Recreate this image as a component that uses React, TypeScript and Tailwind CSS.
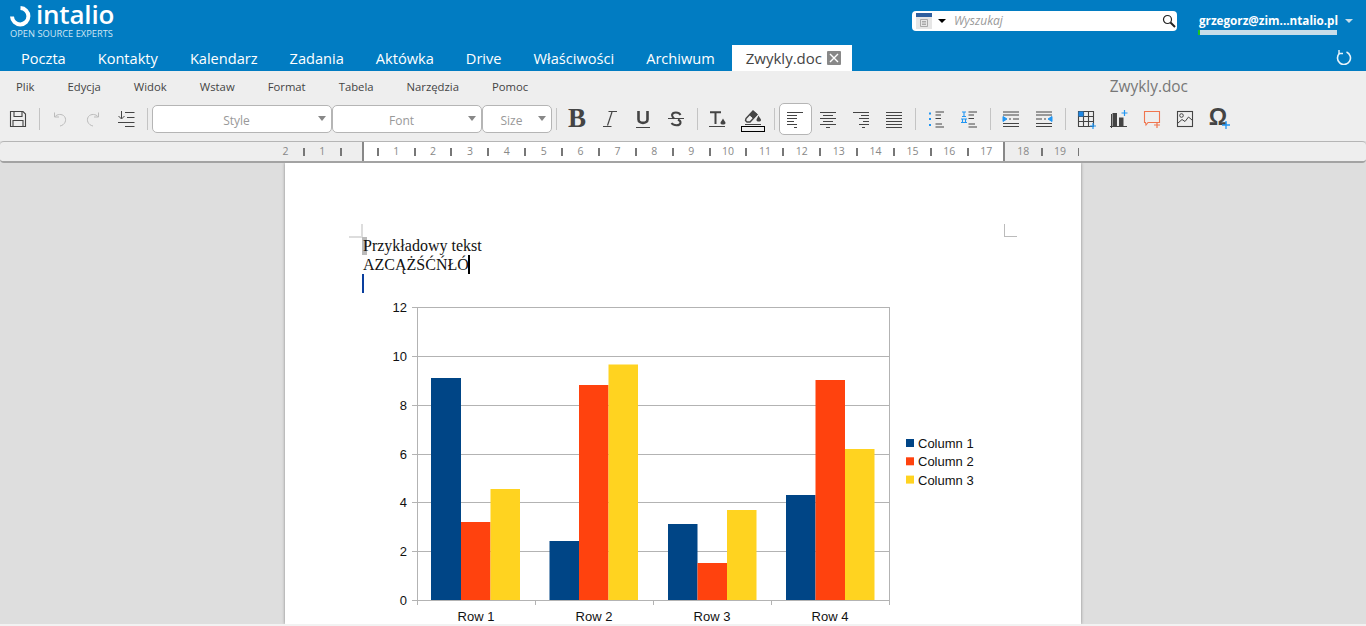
import React from "react";

const tabs = ["Poczta", "Kontakty", "Kalendarz", "Zadania", "Aktówka", "Drive", "Właściwości", "Archiwum"];
const menus = ["Plik", "Edycja", "Widok", "Wstaw", "Format", "Tabela", "Narzędzia", "Pomoc"];

const Ic = ({ children, w = 20, h = 20 }: { children: React.ReactNode; w?: number; h?: number }) => (
  <svg width={w} height={h} viewBox={`0 0 ${w} ${h}`} fill="none" stroke="#444" strokeWidth="1">
    {children}
  </svg>
);

const Btn = ({ children }: { children: React.ReactNode }) => (
  <div className="w-[33px] h-[28px] flex items-center justify-center shrink-0">{children}</div>
);

const Sep = () => <div className="w-px h-[22px] bg-[#c4c4c4] mx-[4px] shrink-0" />;

const Select = ({ label, width, pad }: { label: string; width: string; pad: string }) => (
  <div className={`${width} h-[28px] shrink-0 bg-white border border-[#b5b5b5] rounded-[5px] flex items-center relative`}>
    <span className={`${pad} pt-[4px] text-[12px] text-[#999] text-center`}>{label}</span>
    <span className="absolute right-[5px] top-[10px] w-0 h-0 border-l-[4px] border-r-[4px] border-t-[5px] border-l-transparent border-r-transparent border-t-[#888]" />
  </div>
);

// lines of the alignment icons, [x1, x2, y]
const AlignIcon = ({ rows }: { rows: number[][] }) => (
  <Ic w={18} h={18}>
    {rows.map((r, i) => (
      <path key={i} d={`M${r[0]} ${r[2] + 0.5}H${r[1]}`} />
    ))}
  </Ic>
);

const rulerRow = (from: number, to: number) => {
  const out: React.ReactNode[] = [];
  for (let n = from; n <= to; n++) {
    out.push(
      <div key={"t" + n} className="w-[18.44px] flex justify-center shrink-0">
        <div className="w-[2px] h-[8px] bg-[#777]" />
      </div>
    );
    out.push(
      <div key={"n" + n} className="w-[18.44px] flex justify-center shrink-0 text-[10.5px] text-[#888]">
        {n}
      </div>
    );
  }
  return out;
};

const gridYs = [307.5, 356.5, 405.5, 454.5, 502.5, 551.5, 600.5];
const yLabels = ["12", "10", "8", "6", "4", "2", "0"];
const bars = [
  { x: 431, w: 30, top: 378, c: "#004586" },
  { x: 461, w: 29.5, top: 522, c: "#ff420e" },
  { x: 490.5, w: 29.5, top: 489, c: "#ffd320" },
  { x: 549.5, w: 29.5, top: 541, c: "#004586" },
  { x: 579, w: 29.5, top: 385, c: "#ff420e" },
  { x: 608.5, w: 29.5, top: 364.5, c: "#ffd320" },
  { x: 668, w: 29.5, top: 524, c: "#004586" },
  { x: 697.5, w: 29.5, top: 563, c: "#ff420e" },
  { x: 727, w: 29.5, top: 510, c: "#ffd320" },
  { x: 786, w: 29.5, top: 495, c: "#004586" },
  { x: 815.5, w: 29.5, top: 380, c: "#ff420e" },
  { x: 845, w: 29.5, top: 449, c: "#ffd320" },
];

const Chart = () => (
  <svg width="640" height="332" viewBox="363 293 640 332" className="block" fontFamily="'Liberation Sans', sans-serif" fontSize="13" fill="#111">
    {gridYs.map((y) => (
      <path key={y} d={`M412 ${y}H889.5`} stroke="#b3b3b3" />
    ))}
    <path d="M417.5 307V605M535.5 600V605M653.5 600V605M771.5 600V605M889.5 307V605" stroke="#b3b3b3" />
    {bars.map((b) => (
      <rect key={b.x} x={b.x} y={b.top} width={b.w} height={600 - b.top} fill={b.c} />
    ))}
    {gridYs.map((y, i) => (
      <text key={y} x="407" y={y + 4} textAnchor="end">
        {yLabels[i]}
      </text>
    ))}
    {["Row 1", "Row 2", "Row 3", "Row 4"].map((r, i) => (
      <text key={r} x={476 + i * 118} y="621" textAnchor="middle">
        {r}
      </text>
    ))}
    {["Column 1", "Column 2", "Column 3"].map((c, i) => (
      <g key={c}>
        <rect x="906" y={439 + i * 18.3} width="8" height="8" fill={["#004586", "#ff420e", "#ffd320"][i]} />
        <text x="918" y={448 + i * 18.3}>
          {c}
        </text>
      </g>
    ))}
  </svg>
);

export default function App() {
  return (
    <div className="h-[626px] w-[1366px] overflow-hidden flex flex-col bg-[#dedede] font-['Open_Sans',sans-serif]">
      {/* blue header */}
      <div className="h-[71px] bg-[#017cc2] flex flex-col shrink-0 text-white">
        <div className="h-[45px] flex items-start">
          <div className="ml-[10px] w-[110px] shrink-0">
            <div className="flex items-center h-[28px]">
              <svg width="24" height="26" viewBox="0 0 24 26" fill="none" className="shrink-0">
                <path d="M2 15.5A8.2 8.2 0 1 0 10.5 7" stroke="#fff" strokeWidth="4" />
              </svg>
              <span className="text-[26px] leading-[28px] ml-[2px] font-semibold tracking-[-0.2px]">intalio</span>
            </div>
            <div className="text-[9.3px] leading-[11px] text-[#cfe6f4] whitespace-nowrap">OPEN SOURCE EXPERTS</div>
          </div>
          <div className="ml-[792px] mt-[11px] w-[265px] h-[20px] bg-white rounded-[4px] flex items-center shrink-0 relative">
            <svg width="18" height="18" viewBox="0 0 18 18" className="ml-[3px] shrink-0">
              <rect x="1" y="1" width="16" height="16" fill="#e6e6e6" />
              <rect x="1" y="1" width="16" height="4" fill="#2f5f9e" />
              <path d="M5.5 7.5h7v7h-7zM7 9.5h4M7 11h4M7 12.5h4" stroke="#999" fill="none" strokeWidth="0.8" />
            </svg>
            <span className="ml-[5px] w-0 h-0 border-l-[4px] border-r-[4px] border-t-[4px] border-l-transparent border-r-transparent border-t-black" />
            <span className="ml-[8px] text-[12px] italic text-[#9a9a9a]">Wyszukaj</span>
            <svg width="14" height="14" viewBox="0 0 14 14" fill="none" stroke="#222" className="absolute right-[1px] top-[3px]">
              <circle cx="5.5" cy="5.5" r="4" strokeWidth="1.2" />
              <path d="M8.5 8.5L13 13" strokeWidth="2" />
            </svg>
          </div>
          <div className="ml-[21px] mt-[12px] w-[139px] shrink-0">
            <div className="text-[11.7px] leading-[17px] font-bold whitespace-nowrap pl-[1px]">grzegorz@zim...ntalio.pl</div>
            <div className="h-[5px] mt-[1px] bg-[#c8dde9]">
              <div className="h-[5px] w-[2px] bg-[#1fc31f]" />
            </div>
          </div>
          <span className="ml-[8px] mt-[19px] w-0 h-0 border-l-[4px] border-r-[4px] border-t-[4px] border-l-transparent border-r-transparent border-t-[#c8dde9]" />
        </div>
        <div className="h-[26px] flex items-stretch pl-[5px]">
          {tabs.map((t) => (
            <div key={t} className="px-4 text-[14.6px] leading-[26px]">
              {t}
            </div>
          ))}
          <div className="ml-[1px] w-[120px] bg-white text-[#444] pl-[14px] text-[15px] leading-[26px] flex items-center">
            Zwykly.doc
            <span className="ml-[5px] w-[14px] h-[14px] bg-[#888] flex items-center justify-center rounded-[1px]">
              <svg width="10" height="10" viewBox="0 0 10 10" stroke="#fff" strokeWidth="1.4">
                <path d="M1 1L9 9M9 1L1 9" />
              </svg>
            </span>
          </div>
          <svg width="16" height="16" viewBox="0 0 16 16" fill="none" stroke="#e8f3fa" strokeWidth="1.6" className="ml-auto mr-[14px] mt-[4px]">
            <path d="M10.5 3A6.5 6.5 0 1 1 3.8 4" />
            <path d="M7 4.5H3V1" strokeWidth="1.4" />
          </svg>
        </div>
      </div>

      {/* menu + toolbar */}
      <div className="h-[70px] bg-[#eee] shrink-0 flex flex-col">
        <div className="h-[31px] pt-[1px] flex items-center pl-4 gap-[33px] text-[11.3px] text-[#444]">
          {menus.map((m) => (
            <span key={m}>{m}</span>
          ))}
          <span className="ml-auto mr-[178px] text-[15.4px] text-[#777]">Zwykly.doc</span>
        </div>
        <div className="h-[33px] flex items-center pl-[1.5px]">
          <Btn>
            <Ic w={18} h={18}>
              <path d="M1.5 1.5H14L16.5 4V16.5H1.5Z M5 1.5V6.5H13V1.5 M4 16.5V10.5H14V16.5" strokeWidth="1.1" />
            </Ic>
          </Btn>
          <Sep />
          <Btn>
            <Ic w={16} h={16}>
              <path d="M2.5 1.5V6H7M2.8 5.8C5 3 10 2.5 12.5 5.5C15 9 13 14 8 15" stroke="#bbb" />
            </Ic>
          </Btn>
          <Btn>
            <Ic w={16} h={16}>
              <path d="M13.5 1.5V6H9M13.2 5.8C11 3 6 2.5 3.5 5.5C1 9 3 14 8 15" stroke="#bbb" />
            </Ic>
          </Btn>
          <Btn>
            <Ic w={18} h={18}>
              <path d="M8 2.5H17.5M10 7.5H17.5M1 12.5H17.5M8 16.5H17.5M4.5 1V8.5M1.5 6L4.5 9L7.5 6" />
            </Ic>
          </Btn>
          <Sep />
          <Select label="Style" width="w-[180px]" pad="w-[168px]" />
          <Select label="Font" width="w-[150px]" pad="w-[138px]" />
          <Select label="Size" width="w-[70px]" pad="w-[58px]" />
          <Sep />
          <Btn>
            <span className="font-['Liberation_Serif',serif] font-bold text-[27px] leading-none text-[#444]">B</span>
          </Btn>
          <Btn>
            <Ic w={18} h={18}>
              <path d="M11 2L6.5 15.5" stroke="#444" strokeWidth="1.2" />
              <path d="M7.5 1.5H16M2 16.5H10.5" stroke="#444" />
            </Ic>
          </Btn>
          <Btn>
            <Ic w={18} h={18}>
              <path d="M4.5 1V9.5C4.5 14 13.5 14 13.5 9.5V1" strokeWidth="2.6" />
              <path d="M2 17.5H16" />
            </Ic>
          </Btn>
          <Btn>
            <Ic w={18} h={18}>
              <path d="M13.5 5C12 1.5 5.5 1.5 5 5C5 6.5 6 7.5 7 8.5M11 9.5C13 10.5 13.8 11.5 13.5 13C13 16 6.5 16 4.5 13" strokeWidth="2" />
              <path d="M1 8.5H17" />
            </Ic>
          </Btn>
          <Sep />
          <Btn>
            <Ic w={20} h={18}>
              <path d="M2 2.2H13M7.5 2V14" strokeWidth="2" />
              <path d="M1 16.5H17" />
              <path d="M15 8.5C13.8 11 12.5 11.5 12.5 13C12.5 15 17.5 15 17.5 13C17.5 11.5 16.2 11 15 8.5Z" fill="#444" stroke="none" />
            </Ic>
          </Btn>
          <div className="w-[33px] h-[28px] flex flex-col items-center justify-center shrink-0 ml-[2px] pt-[3px]">
            <Ic w={18} h={17}>
              <path d="M2 10.5L9 3L13 6.5L6 14H3L1.5 12.5Z" strokeWidth="1.4" />
              <path d="M9 3L13 6.5L9.5 10.3L5.5 6.8Z" fill="#444" />
              <path d="M14.5 7.5C13.5 10 12.5 10.5 12.5 12C12.5 14 17 14 17 12C17 10.5 15.5 10 14.5 7.5Z" fill="#444" stroke="none" />
              <path d="M1 16.5H17" />
            </Ic>
            <div className="w-[24px] h-[6px] border border-black bg-[#eee] mt-[1px]" />
          </div>
          <Sep />
          <div className="w-[33px] h-[32px] bg-white border border-[#b5b5b5] rounded-[5px] flex items-center justify-center shrink-0">
            <AlignIcon rows={[[1, 17, 2], [1, 11, 5], [1, 11, 8], [1, 8, 11], [1, 11, 14], [8, 11, 17]]} />
          </div>
          <Btn>
            <AlignIcon rows={[[1, 17, 2], [4, 14, 5], [1, 17, 8], [4, 14, 11], [1, 17, 14], [7, 11, 17]]} />
          </Btn>
          <Btn>
            <AlignIcon rows={[[1, 17, 2], [9, 17, 5], [7, 17, 8], [11, 17, 11], [7, 17, 14], [10, 13, 17]]} />
          </Btn>
          <Btn>
            <AlignIcon rows={[[1, 17, 2], [1, 17, 5], [1, 17, 8], [1, 17, 11], [1, 17, 14], [1, 17, 17]]} />
          </Btn>
          <Sep />
          <Btn>
            <Ic w={18} h={18}>
              <path d="M3 2.5V4.5M3 8V10M3 14V16" stroke="#2196f3" strokeWidth="2" />
              <path d="M8.5 2H17M8.5 5H14M8.5 8.5H14M8.5 14H15M8.5 17H17" />
            </Ic>
          </Btn>
          <Btn>
            <Ic w={18} h={18}>
              <path d="M2 2H6M4 2V6.5M2 6.5H6M1 9H7M1 12.5H7M2.5 9V12.5M5.5 9V12.5" stroke="#2196f3" strokeWidth="1.1" />
              <path d="M8.5 2H17M8.5 5H14M8.5 8.5H14M8.5 14H15M8.5 17H17" />
            </Ic>
          </Btn>
          <Sep />
          <Btn>
            <Ic w={18} h={18}>
              <path d="M1 2H17M1 5H17M7 9H9M11 9H17M1 13.5H17M1 16.5H17" />
              <path d="M1 6.5V11.5L5 9Z" fill="#2196f3" stroke="#2196f3" />
            </Ic>
          </Btn>
          <Btn>
            <Ic w={18} h={18}>
              <path d="M1 2H17M1 5H17M1 9H7M9 9H11M1 13.5H17M1 16.5H17" />
              <path d="M17 6.5V11.5L13 9Z" fill="#2196f3" stroke="#2196f3" />
            </Ic>
          </Btn>
          <Sep />
          <Btn>
            <Ic w={20} h={20}>
              <path d="M2.5 2.5H17.5V17.5H2.5ZM2.5 7.5H17.5M2.5 12.5H17.5M7.5 2.5V17.5M12.5 2.5V17.5" strokeWidth="1.1" />
              <rect x="2.5" y="2.5" width="5" height="5" fill="#1e88e5" stroke="none" />
              <path d="M17 14V20M14 17H20" stroke="#2196f3" strokeWidth="1.2" fill="none" />
            </Ic>
          </Btn>
          <Btn>
            <Ic w={20} h={20}>
              <rect x="3.5" y="4" width="4.5" height="13.5" fill="#444" stroke="none" />
              <rect x="10" y="8.5" width="4.5" height="9" fill="#444" stroke="none" />
              <path d="M1 17.5H18M2.5 5V19" />
              <path d="M15.5 1V7M12.5 4H18.5" stroke="#2196f3" strokeWidth="1.2" />
            </Ic>
          </Btn>
          <Btn>
            <Ic w={20} h={20}>
              <path d="M2.5 2.5H17.5V13.5H6L4 16L3.5 13.5H2.5Z" stroke="#f0764f" strokeWidth="1.1" />
              <path d="M15 13V19M12 16H18" stroke="#f0764f" strokeWidth="1.2" />
            </Ic>
          </Btn>
          <Btn>
            <Ic w={18} h={18}>
              <rect x="1.5" y="1.5" width="15" height="15" strokeWidth="1.1" />
              <circle cx="5.5" cy="5.5" r="1.8" />
              <path d="M2 13L6 9.5L9 11.5L12.5 7L16 10" />
            </Ic>
          </Btn>
          <Btn>
            <div className="relative">
              <span className="font-['Liberation_Sans',sans-serif] font-bold text-[23px] leading-none text-[#444]">Ω</span>
              <svg width="8" height="8" viewBox="0 0 8 8" stroke="#2196f3" strokeWidth="1.3" className="absolute right-[-3px] bottom-[2px]">
                <path d="M4 0V8M0 4H8" />
              </svg>
            </div>
          </Btn>
        </div>
        <div className="h-[6px]" />
      </div>

      {/* ruler */}
      <div className="relative z-10 h-[22px] shrink-0 bg-[#eee] border-t border-t-[#b5b5b5] border-b-2 border-b-[#a3a3a3] rounded-[4px] flex overflow-hidden">
        <div className="w-[362px] shrink-0 flex justify-end items-center pr-[12px] text-[10.5px] text-[#888]">
          <div className="w-[18.44px] text-center">2</div>
          <div className="w-[18.44px] flex justify-center">
            <div className="w-[2px] h-[8px] bg-[#777]" />
          </div>
          <div className="w-[18.44px] text-center">1</div>
          <div className="w-[18.44px] flex justify-center">
            <div className="w-[2px] h-[8px] bg-[#777]" />
          </div>
        </div>
        <div className="w-[2px] shrink-0 bg-[#888]" />
        <div className="w-[639px] shrink-0 bg-white flex items-center pl-[4.5px]">{rulerRow(1, 17)}</div>
        <div className="w-[2px] shrink-0 bg-[#888]" />
        <div className="flex items-center pl-[9px]">
          <div className="w-[18.44px] flex justify-center shrink-0 text-[10.5px] text-[#888]">18</div>
          <div className="w-[18.44px] flex justify-center shrink-0">
            <div className="w-[2px] h-[8px] bg-[#777]" />
          </div>
          <div className="w-[18.44px] flex justify-center shrink-0 text-[10.5px] text-[#888]">19</div>
          <div className="w-[18.44px] flex justify-center shrink-0">
            <div className="w-px h-[8px] bg-[#777]" />
          </div>
        </div>
      </div>

      {/* document */}
      <div className="flex-1 min-h-0 overflow-hidden">
        <div className="relative ml-[285px] w-[796px] h-full bg-white shadow-[0_0_3px_rgba(0,0,0,0.4)] pl-[78px] pt-[73px] font-['Liberation_Serif',serif] text-[16px] leading-[19px] text-[#111]">
          <div className="absolute left-[76px] top-[61px] w-[2px] h-[14px] bg-[#ddd]" />
          <div className="absolute left-[64px] top-[73px] w-[13px] h-[2px] bg-[#ddd]" />
          <div className="absolute left-[719px] top-[61px] w-[1px] h-[13px] bg-[#bbb]" />
          <div className="absolute left-[719px] top-[73px] w-[13px] h-[1px] bg-[#bbb]" />
          <div className="absolute left-[77px] top-[74px] w-[5px] h-[18px] bg-[#bbb]" />
          <div className="relative">Przykładowy tekst</div>
          <div className="flex items-stretch">
            <span>AZCĄŻŚĆŃŁÓ</span>
            <span className="w-[2px] bg-black ml-[-1px]" />
          </div>
          <div className="h-[19px] w-[2px] bg-[#0a3f9e] ml-[-1px]" />
          <Chart />
        </div>
      </div>
      <div className="relative z-10 h-[2px] shrink-0 bg-[#f2f2f2]" />
    </div>
  );
}
